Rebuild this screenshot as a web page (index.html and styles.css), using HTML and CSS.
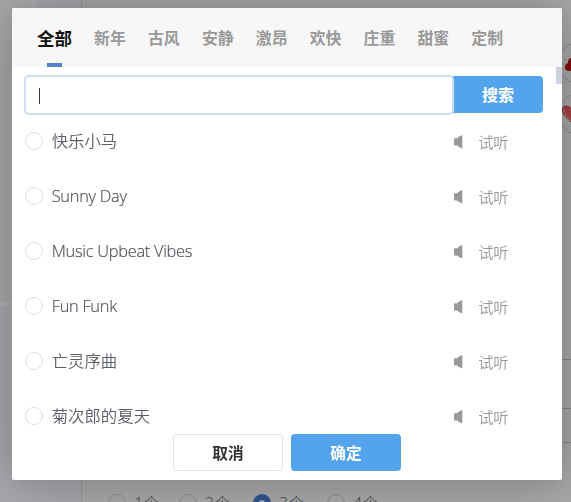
FILE: index.html
```
<!DOCTYPE html>
<html lang="zh-CN">
<head>
<meta charset="utf-8">
<title>音乐</title>
<link rel="stylesheet" href="styles.css">
</head>
<body>
<div class="page">
  <aside class="side"><div class="side-top"></div></aside>
  <main class="content">
    <div class="stickers">
      <div class="sticker"><svg width="40" height="40" viewBox="0 0 40 40"><g fill="#870d0d"><circle cx="13" cy="19" r="4"/><circle cx="10" cy="24" r="4"/><circle cx="17" cy="24" r="5"/></g><path d="M5 15l1 1M4 26h2" stroke="#a89649"/></svg></div>
      <div class="sticker"><svg width="40" height="40" viewBox="0 0 40 40"><path d="M18 34L8 24C1 17 3 12 7 12C11 12 13 15 14 19C17 10 30 10 28 20Z" fill="#a54043" stroke="#873237"/><path d="M5 15q0 6 7 12" fill="none" stroke="#b98183"/></svg></div>
    </div>
    <div class="lines"><i></i><i></i><i></i></div>
    <div class="counts">
      <label><i class="dot"></i>1个</label>
      <label><i class="dot"></i>2个</label>
      <label><i class="dot on"></i>3个</label>
      <label><i class="dot"></i>4个</label>
    </div>
  </main>
</div>
<section class="dialog">
  <nav class="tabs">
    <a class="active">全部</a><a>新年</a><a>古风</a><a>安静</a><a>激昂</a><a>欢快</a><a>庄重</a><a>甜蜜</a><a>定制</a>
  </nav>
  <div class="body">
    <div class="thumb"></div>
    <div class="search"><div class="field"><i class="caret"></i></div><button class="go">搜索</button></div>
    <ul class="songs">
      <li><i class="radio"></i><span class="name">快乐小马</span><svg class="speaker" viewBox="0 0 9 14"><path d="M0 4Q0 3.2.8 3.2H3L5 1.5 8.3 0V13.5L5 12 3 10.5H.8Q0 10.5 0 9.7Z"/></svg><span class="try">试听</span></li>
      <li><i class="radio"></i><span class="name latin">Sunny Day</span><svg class="speaker" viewBox="0 0 9 14"><path d="M0 4Q0 3.2.8 3.2H3L5 1.5 8.3 0V13.5L5 12 3 10.5H.8Q0 10.5 0 9.7Z"/></svg><span class="try">试听</span></li>
      <li><i class="radio"></i><span class="name latin">Music Upbeat Vibes</span><svg class="speaker" viewBox="0 0 9 14"><path d="M0 4Q0 3.2.8 3.2H3L5 1.5 8.3 0V13.5L5 12 3 10.5H.8Q0 10.5 0 9.7Z"/></svg><span class="try">试听</span></li>
      <li><i class="radio"></i><span class="name latin">Fun Funk</span><svg class="speaker" viewBox="0 0 9 14"><path d="M0 4Q0 3.2.8 3.2H3L5 1.5 8.3 0V13.5L5 12 3 10.5H.8Q0 10.5 0 9.7Z"/></svg><span class="try">试听</span></li>
      <li><i class="radio"></i><span class="name">亡灵序曲</span><svg class="speaker" viewBox="0 0 9 14"><path d="M0 4Q0 3.2.8 3.2H3L5 1.5 8.3 0V13.5L5 12 3 10.5H.8Q0 10.5 0 9.7Z"/></svg><span class="try">试听</span></li>
      <li><i class="radio"></i><span class="name">菊次郎的夏天</span><svg class="speaker" viewBox="0 0 9 14"><path d="M0 4Q0 3.2.8 3.2H3L5 1.5 8.3 0V13.5L5 12 3 10.5H.8Q0 10.5 0 9.7Z"/></svg><span class="try">试听</span></li>
    </ul>
    <footer class="actions"><button class="cancel">取消</button><button class="ok">确定</button></footer>
  </div>
</section>
</body>
</html>
```
FILE: styles.css
```
* { box-sizing: border-box; }
body { margin: 0; height: 502px; overflow: hidden; font-family: "Open Sans", "Noto Sans CJK SC", sans-serif; }
button { font: inherit; padding: 0; border: 0; }
i { font-style: normal; }
.page { display: grid; grid-template-columns: 82px minmax(0, 1fr); height: 502px; background: #a9a9a9; overflow: hidden; }
.side { background: #a8a9ae; border-right: 1px solid #96979f; }
.side-top { width: 36px; height: 306px; background: #a9a9a9; border-right: 4px solid #b0b0b3; border-bottom: 4px solid #b0b0b3; border-bottom-right-radius: 8px; }
.content { display: flex; flex-direction: column; height: 502px; overflow: hidden; }
.stickers { height: 320px; flex: none; padding-top: 42px; padding-left: 476px; }
.sticker { width: 42px; height: 42px; margin-bottom: 9px; border: 1px solid #8d8d8d; border-radius: 50%; }
.sticker svg { display: block; }
.lines { height: 172px; flex: none; display: flex; flex-direction: column; }
.lines i { height: 40px; border-bottom: 1px solid #85878c; }
.lines i:nth-child(2) { height: 49px; }
.lines i:nth-child(3) { height: 34px; }
.counts { display: flex; padding-left: 26px; flex: none; font-size: 16px; line-height: 22px; color: #404246; font-weight: 300; }
.counts label { display: flex; width: 71px; gap: 8px; }
.counts label:nth-child(2), .counts label:nth-child(3) { width: 74px; }
.dot { width: 18px; height: 18px; margin-top: 2px; border: 1px solid #8b8c92; border-radius: 50%; }
.dot.on { border: 6px solid #2e568f; background: #aaa; }
.dialog { position: fixed; left: 12px; top: 8px; width: 550px; height: 472px; background: #fff; border-radius: 2px; box-shadow: 1px 1px 50px rgba(0,0,0,.3); overflow: hidden; }
.tabs { display: flex; height: 59px; padding-left: 24.8px; gap: 22px; background: #f7f7f7; font-size: 15.9px; line-height: 24px; color: #999; font-weight: 700; font-family: "Noto Sans CJK SC", sans-serif; }
.tabs a { width: 31.9px; height: 59px; padding-top: 17.5px; white-space: nowrap; }
.tabs .active { width: 35.3px; font-size: 17.5px; color: #111; display: flex; flex-direction: column; align-items: center; justify-content: space-between; }
.tabs .active::after { content: ""; width: 15px; height: 4px; background: #5181cb; }
.body { position: relative; padding: 7px 19px 0 12px; }
.thumb { position: absolute; right: 0; top: 0; width: 6px; height: 17px; background: #cdd3de; }
.search { display: flex; align-items: center; height: 41px; }
.field { width: 430px; height: 40px; padding: 11px 0 0 14px; border: 2px solid #cfdff3; border-radius: 5px; box-shadow: 0 0 1px #cfdff3; position: relative; z-index: 1; }
.caret { display: block; width: 1px; height: 16px; background: #333846; margin-left: -1px; }
.go { width: 90px; height: 37px; margin-left: -1px; background: #53a4ec; color: #fff; border-radius: 0 4px 4px 0; font-size: 16px; line-height: 36px; font-weight: 700; }
.songs { list-style: none; margin: 0; padding: 0; height: 319px; overflow: hidden; }
.songs li { display: flex; align-items: center; height: 55px; padding: 0 0 4px 1px; }
.radio { width: 18px; height: 18px; border: 1px solid #d9dde8; border-radius: 50%; margin-right: 8.7px; }
.name { width: 402.3px; font-size: 16.4px; line-height: 24px; color: #5a5e65; font-weight: 350; }
.latin { font-family: "Open Sans", sans-serif; font-weight: 300; color: #4a4e55; letter-spacing: -.28px; -webkit-text-stroke: .15px #4a4e55; }
.speaker { width: 9px; height: 14px; margin-right: 15.2px; fill: #999; position: relative; top: 1px; }
.try { font-size: 15.2px; line-height: 24px; font-weight: 350; color: #999; padding-top: 2px; }
.actions { display: flex; justify-content: center; gap: 8px; padding-left: 7px; }
.actions button { width: 110px; height: 37px; border-radius: 4px; font-size: 15.7px; line-height: 34px; font-weight: 700; }
.actions .cancel { background: #fff; border: 1px solid #dce3ec; color: #333; }
.actions .ok { background: #53a4ec; color: #fff; }
```
